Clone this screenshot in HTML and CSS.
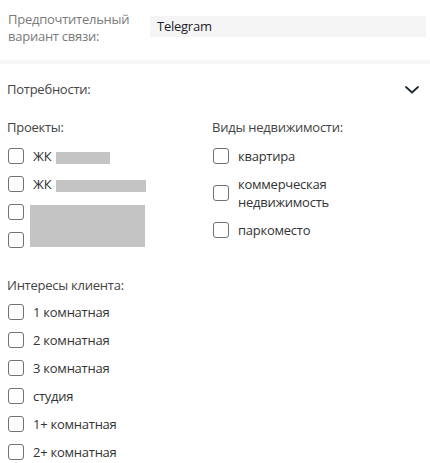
FILE: index.html
```html
<!DOCTYPE html>
<html lang="ru">
<head>
<meta charset="utf-8">
<link rel="stylesheet" href="styles.css">
</head>
<body>
<div class="field-row">
  <div class="field-label">Предпочтительный<br>вариант связи:</div>
  <div class="field-value">Telegram</div>
</div>
<div class="divider"></div>
<div class="section-header">
  <span>Потребности:</span>
  <svg class="chevron" width="14" height="8" viewBox="0 0 14 8"><path d="M1 1 L7 6.5 L13 1" fill="none" stroke="#1f2937" stroke-width="1.8" stroke-linecap="round" stroke-linejoin="round"/></svg>
</div>
<div class="columns">
  <div class="group">
    <div class="group-title">Проекты:</div>
    <div class="list projects">
      <label class="item"><span class="box"></span><span class="text">ЖК <span class="redact r1"></span></span></label>
      <label class="item"><span class="box"></span><span class="text">ЖК <span class="redact r2"></span></span></label>
      <label class="item"><span class="box"></span><span class="text"></span></label>
      <label class="item"><span class="box"></span><span class="text"></span></label>
      <div class="redact-block"></div>
    </div>
  </div>
  <div class="group">
    <div class="group-title">Виды недвижимости:</div>
    <div class="list">
      <label class="item"><span class="box"></span><span class="text">квартира</span></label>
      <label class="item"><span class="box"></span><span class="text">коммерческая<br>недвижимость</span></label>
      <label class="item"><span class="box"></span><span class="text">паркоместо</span></label>
    </div>
  </div>
</div>
<div class="group interests">
  <div class="group-title">Интересы клиента:</div>
  <div class="list">
    <label class="item"><span class="box"></span><span class="text">1 комнатная</span></label>
    <label class="item"><span class="box"></span><span class="text">2 комнатная</span></label>
    <label class="item"><span class="box"></span><span class="text">3 комнатная</span></label>
    <label class="item"><span class="box"></span><span class="text">студия</span></label>
    <label class="item"><span class="box"></span><span class="text">1+ комнатная</span></label>
    <label class="item"><span class="box"></span><span class="text">2+ комнатная</span></label>
  </div>
</div>
</body>
</html>
```
FILE: styles.css
```css
* { box-sizing: border-box; }
body {
  margin: 0;
  width: 430px;
  background: #fff;
  font-family: "Open Sans", "Noto Sans", sans-serif;
  font-size: 13px;
  letter-spacing: -0.25px;
  color: #333;
}
.field-row {
  display: flex;
  align-items: flex-start;
  padding: 11px 4px 9px 8px;
  height: 60px;
}
.field-label {
  width: 142px;
  line-height: 17px;
  color: #7a7a7a;
}
.field-value {
  flex: 1;
  margin-top: 5px;
  height: 21px;
  background: #f5f5f6;
  padding-left: 7px;
  line-height: 21px;
  color: #1d1d2b;
}
.divider {
  height: 4px;
  background: #f7f7f7;
}
.section-header {
  display: flex;
  justify-content: space-between;
  align-items: center;
  padding: 16px 11px 0 7px;
  line-height: 18px;
  color: #444;
}
.chevron { display: block; margin-top: 1px; }
.columns {
  display: grid;
  grid-template-columns: 205px 1fr;
  padding: 20px 8px 0 7px;
}
.group-title {
  line-height: 18px;
  color: #444;
}
.list {
  display: flex;
  flex-direction: column;
  gap: 10px;
  margin-top: 11px;
}
.projects { position: relative; }
.item {
  display: flex;
  align-items: center;
  line-height: 18px;
  min-height: 18px;
}
.box {
  flex: none;
  width: 16px;
  height: 16px;
  margin-left: 1px;
  border: 1.5px solid #6f7479;
  border-radius: 3px;
  margin-right: 9px;
}
.text { color: #333; }
.redact {
  display: inline-block;
  vertical-align: middle;
  height: 12px;
  background: #c4c4c4;
  margin-left: 1px;
}
.r1 { width: 54px; }
.r2 { width: 90px; }
.redact-block {
  position: absolute;
  left: 23px;
  top: 58px;
  width: 115px;
  height: 42px;
  background: #c4c4c4;
}
.interests {
  padding: 27px 8px 0 7px;
}
.interests .list { margin-top: 9px; }
```
